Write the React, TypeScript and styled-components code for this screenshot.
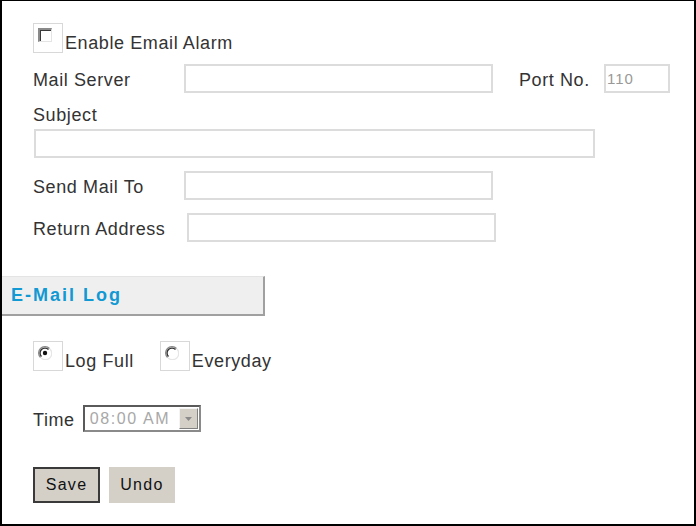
import React from "react";
import styled, { createGlobalStyle } from "styled-components";

const GlobalStyle = createGlobalStyle`
  html, body {
    margin: 0;
    padding: 0;
    background: #fff;
  }
  body {
    font-family: "Liberation Sans", Arial, sans-serif;
  }
`;

const Frame = styled.div`
  box-sizing: border-box;
  width: 696px;
  height: 526px;
  border: 2px solid #000;
  border-top-width: 1px;
  background: #fff;
  color: #333;
  font-size: 18px;
  letter-spacing: 0.6px;
`;

const Section = styled.div`
  padding-left: 31px;
`;

const Row = styled.div<{ top: number }>`
  display: flex;
  align-items: center;
  margin-top: ${({ top }) => top}px;
  height: 29px;
`;

const Label = styled.span<{ width?: number }>`
  display: inline-block;
  width: ${({ width }) => (width ? `${width}px` : "auto")};
  flex-shrink: 0;
  white-space: nowrap;
  padding-top: 3px;
`;

const TextInput = styled.input<{ width: number }>`
  box-sizing: border-box;
  width: ${({ width }) => width}px;
  height: 29px;
  border: 2px solid #dcdcdc;
  background: #fff;
  padding: 0 1px;
  font-family: "Liberation Sans", Arial, sans-serif;
  font-size: 15px;
  letter-spacing: 1px;
  color: #999;
  outline: none;
`;

const SubjectLabel = styled.div`
  margin-top: 11px;
  height: 22px;
  line-height: 22px;
`;

const SubjectInput = styled(TextInput)`
  display: block;
  margin-top: 3px;
  margin-left: 1px;
`;

const BoxWrap = styled.span`
  box-sizing: border-box;
  display: inline-flex;
  width: 30px;
  height: 30px;
  border: 1px solid #d8d8d8;
  padding: 4px 0 0 4px;
  margin-right: 2px;
  flex-shrink: 0;
`;

const CheckBox = styled.span`
  box-sizing: border-box;
  display: block;
  width: 14px;
  height: 14px;
  background: #fff;
  border-top: 2px solid #8a8a8a;
  border-left: 2px solid #8a8a8a;
  border-right: 1px solid #e4e4e4;
  border-bottom: 1px solid #e4e4e4;
  box-shadow: inset 1px 1px 0 #3a3a3a;
`;

const CheckRow = styled.label`
  display: flex;
  align-items: flex-end;
  margin-top: 22px;
  height: 30px;
  line-height: 20px;
`;

const Header = styled.div`
  box-sizing: border-box;
  width: 263px;
  height: 40px;
  margin-top: 34px;
  background: #efefef;
  border-right: 2px solid #a0a0a0;
  border-bottom: 2px solid #a0a0a0;
  border-top: 1px solid #e4e4e4;
  display: flex;
  align-items: center;
  padding-left: 9px;
  font-weight: bold;
  font-size: 18px;
  letter-spacing: 2px;
  color: #1199d4;
`;

const RadioRow = styled.div`
  display: flex;
  align-items: flex-end;
  margin-top: 25px;
  height: 30px;
  line-height: 20px;
`;

const RadioOption = styled.label`
  display: flex;
  align-items: flex-end;
  margin-right: 26px;
`;

const TimeRow = styled.div`
  display: flex;
  align-items: center;
  margin-top: 34px;
  height: 27px;
`;

const Select = styled.div`
  box-sizing: border-box;
  display: flex;
  align-items: stretch;
  width: 118px;
  height: 27px;
  margin-left: 8px;
  border: 2px solid #5a5a5a;
  border-right-color: #8a8a8a;
  border-bottom-color: #8a8a8a;
  background: #fff;
`;

const SelectValue = styled.span`
  flex: 1;
  display: flex;
  align-items: center;
  padding-left: 5px;
  font-size: 16px;
  letter-spacing: 1.6px;
  color: #a8a8a8;
`;

const SelectArrow = styled.span`
  box-sizing: border-box;
  width: 19px;
  margin: 1px;
  background: #d4d0c8;
  border-top: 1px solid #f4f4f4;
  border-left: 1px solid #f4f4f4;
  border-right: 1px solid #808080;
  border-bottom: 1px solid #808080;
  display: flex;
  align-items: center;
  justify-content: center;
`;

const ButtonRow = styled.div`
  display: flex;
  gap: 9px;
  margin-top: 35px;
`;

const Button = styled.button<{ primary?: boolean }>`
  box-sizing: border-box;
  height: 36px;
  width: ${({ primary }) => (primary ? 67 : 66)}px;
  background: #d4d0c8;
  border: ${({ primary }) => (primary ? "2px solid #3a3a3a" : "none")};
  font-family: "Liberation Sans", Arial, sans-serif;
  font-size: 16px;
  letter-spacing: 1.3px;
  color: #111;
  padding: 0;
  cursor: pointer;
`;

const Radio = ({ checked }: { checked?: boolean }) => (
  <svg width="14" height="14" viewBox="0 0 14 14">
    <circle cx="7" cy="7" r="6" fill="#fff" />
    <path d="M2.5 11.5 A6.2 6.2 0 0 1 11.5 2.5" fill="none" stroke="#8a8a8a" strokeWidth="1.3" />
    <path d="M3.5 10.5 A4.9 4.9 0 0 1 10.5 3.5" fill="none" stroke="#303030" strokeWidth="1.3" />
    <path d="M11.9 3 A6.2 6.2 0 0 1 3 11.9" fill="none" stroke="#e6e6e6" strokeWidth="1.3" />
    {checked && <circle cx="7" cy="7" r="2.2" fill="#111" />}
  </svg>
);

const App = () => (
  <>
    <GlobalStyle />
    <Frame>
      <Section>
        <CheckRow>
          <BoxWrap>
            <CheckBox />
          </BoxWrap>
          Enable Email Alarm
        </CheckRow>

        <Row top={11}>
          <Label width={151}>Mail Server</Label>
          <TextInput width={309} />
          <Label style={{ marginLeft: 26 }} width={85}>
            Port No.
          </Label>
          <TextInput width={66} defaultValue="110" />
        </Row>

        <SubjectLabel>Subject</SubjectLabel>
        <SubjectInput width={561} />

        <Row top={13}>
          <Label width={151}>Send Mail To</Label>
          <TextInput width={309} />
        </Row>

        <Row top={13}>
          <Label width={154}>Return Address</Label>
          <TextInput width={309} />
        </Row>
      </Section>

      <Header>E-Mail Log</Header>

      <Section>
        <RadioRow>
          <RadioOption>
            <BoxWrap>
              <Radio checked />
            </BoxWrap>
            Log Full
          </RadioOption>
          <RadioOption>
            <BoxWrap>
              <Radio />
            </BoxWrap>
            Everyday
          </RadioOption>
        </RadioRow>

        <TimeRow>
          <Label>Time</Label>
          <Select>
            <SelectValue>08:00 AM</SelectValue>
            <SelectArrow>
              <svg width="7" height="4" viewBox="0 0 7 4">
                <path d="M0 0 H7 L3.5 4 Z" fill="#8a8a8a" />
              </svg>
            </SelectArrow>
          </Select>
        </TimeRow>

        <ButtonRow>
          <Button primary>Save</Button>
          <Button>Undo</Button>
        </ButtonRow>
      </Section>
    </Frame>
  </>
);

export default App;
